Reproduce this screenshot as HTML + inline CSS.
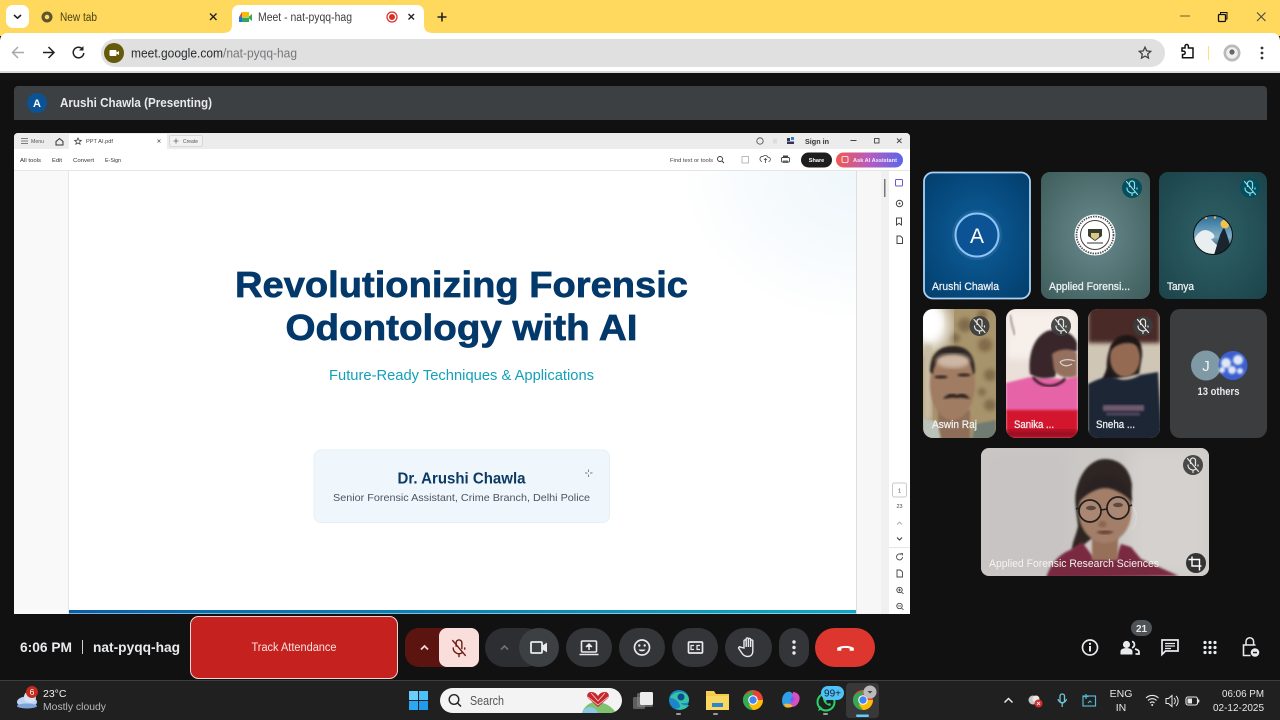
<!DOCTYPE html>
<html><head><meta charset="utf-8"><title>Meet - nat-pyqq-hag</title>
<style>
html,body{margin:0;padding:0;background:#111;width:1280px;height:720px;overflow:hidden}
svg{display:block;position:absolute;left:0;top:0;filter:blur(.3px)}
text{font-family:"Liberation Sans",sans-serif}
.m{stroke:#eef2f4;stroke-width:.28px}
</style></head><body>
<svg width="1280" height="720" viewBox="0 0 1280 720" xmlns="http://www.w3.org/2000/svg">
<defs>
<filter id="b1"><feGaussianBlur stdDeviation="1"/></filter>
<filter id="b2"><feGaussianBlur stdDeviation="2"/></filter>
<filter id="b4"><feGaussianBlur stdDeviation="4"/></filter>
<filter id="b8"><feGaussianBlur stdDeviation="8"/></filter>
<radialGradient id="g1" cx=".5" cy=".5" r=".65"><stop offset="0" stop-color="#0e5f9c"/><stop offset="1" stop-color="#03406f"/></radialGradient>
<radialGradient id="g2" cx=".5" cy=".5" r=".65"><stop offset="0" stop-color="#698a8e"/><stop offset="1" stop-color="#41605f"/></radialGradient>
<radialGradient id="g3" cx=".5" cy=".5" r=".65"><stop offset="0" stop-color="#2f6268"/><stop offset="1" stop-color="#1d454c"/></radialGradient>
<radialGradient id="corner" cx="1" cy="0" r="1"><stop offset="0" stop-color="#eff7fb"/><stop offset=".6" stop-color="#f7fbfd"/><stop offset="1" stop-color="#ffffff"/></radialGradient>
<linearGradient id="ai" x1="0" x2="1"><stop offset="0" stop-color="#f0594f"/><stop offset=".5" stop-color="#b65cc0"/><stop offset="1" stop-color="#5a67e8"/></linearGradient>
<linearGradient id="bar" x1="0" x2="1"><stop offset="0" stop-color="#0a5fa8"/><stop offset="1" stop-color="#12a7c4"/></linearGradient>
<linearGradient id="wave" x1="0" x2="0" y1="0" y2="1"><stop offset="0" stop-color="#2a6a95"/><stop offset=".55" stop-color="#7fb0c8"/><stop offset="1" stop-color="#10202c"/></linearGradient>
<linearGradient id="fold" x1="0" x2="0" y1="0" y2="1"><stop offset="0" stop-color="#f7d154"/><stop offset="1" stop-color="#e9b32e"/></linearGradient>
<clipPath id="c4"><rect x="923" y="309" width="73" height="129" rx="10"/></clipPath>
<clipPath id="c5"><rect x="1006" y="309" width="72" height="129" rx="10"/></clipPath>
<clipPath id="c6"><rect x="1088" y="309" width="72" height="129" rx="10"/></clipPath>
<clipPath id="c8"><rect x="981" y="448" width="228" height="128" rx="8"/></clipPath>
<clipPath id="tanya"><circle cx="1213" cy="235" r="19.500"/></clipPath>
<clipPath id="pill"><rect x="440" y="688" width="182" height="25" rx="12.500"/></clipPath>
<g id="mute" fill="none" stroke-linecap="round" stroke-width="1.200">
<path d="M-2.500-1.500v-3a2.500 2.500 0 0 1 5 0v5"/><path d="M-5 0a5 5 0 0 0 8 4M5 0v1M0 5v2.500M-5.500-6.500L5.500 6.500"/>
</g>
</defs>

<!-- page -->
<rect width="1280" height="720" fill="#111112"/>

<!-- browser chrome -->
<rect width="1280" height="36" fill="#ffd95e"/>
<rect x="6" y="5" width="23" height="23" rx="7" fill="#fff"/>
<path d="M14 15l3.500 3.200L21 15" fill="none" stroke="#222" stroke-width="1.600"/>
<circle cx="47" cy="17" r="5.500" fill="#5f5430"/><circle cx="47" cy="17" r="2.300" fill="#ffd95e"/>
<text x="60" y="21" font-size="11.500" fill="#4b4215" textLength="37" lengthAdjust="spacingAndGlyphs">New tab</text>
<path d="M210 13.500l6.500 6.500M216.500 13.500l-6.500 6.500" stroke="#222" stroke-width="1.400"/>
<path d="M222 33c7 0 10-2 10-9v-12c0-4 3-7 7-7h178c4 0 7 3 7 7v12c0 7 3 9 10 9z" fill="#fff"/>
<!-- meet logo -->
<rect x="242" y="12" width="7" height="5" fill="#fbbc04"/>
<path d="M242 12v5h-3z" fill="#ea4335"/>
<rect x="239" y="17" width="3" height="5" fill="#1a73e8"/><rect x="242" y="17.500" width="7" height="4.500" fill="#34a853"/>
<path d="M249 16.500l3-2.500v7l-3-2.500z" fill="#34a853"/>
<text x="258" y="21" font-size="11.500" fill="#3c4043" textLength="94" lengthAdjust="spacingAndGlyphs">Meet - nat-pyqq-hag</text>
<circle cx="392" cy="17" r="5" fill="none" stroke="#d93025" stroke-width="1.200"/><circle cx="392" cy="17" r="3" fill="#d93025"/>
<path d="M408.500 14l5.500 5.500M414 14l-5.500 5.500" stroke="#222" stroke-width="1.400"/>
<path d="M442 12.500v9M437.500 17h9" stroke="#222" stroke-width="1.600"/>
<!-- caption -->
<path d="M1180 16h10" stroke="#6b5c22" stroke-width="1"/>
<rect x="1218.500" y="14.500" width="7" height="7" rx="1" fill="none" stroke="#111" stroke-width="1.300"/><path d="M1220.500 14v-1.500h6.500v6.500h-1.500" fill="none" stroke="#111" stroke-width="1"/>
<path d="M1257 12.500l8.500 8.500M1265.500 12.500l-8.500 8.500" stroke="#444" stroke-width="1"/>

<!-- toolbar -->
<path d="M0 71V41c0-5 3-8 8-8h1264c5 0 8 3 8 8v30z" fill="#fff"/>
<rect x="0" y="71" width="1280" height="2" fill="#d9d9d9"/>
<path d="M24 52.500H13M18 47l-5.500 5.500L18 58" fill="none" stroke="#a8a8a8" stroke-width="1.500"/>
<path d="M43 52.500h11M48.500 47l5.500 5.500L48.500 58" fill="none" stroke="#222" stroke-width="1.500"/>
<path d="M82.500 49a5.300 5.300 0 1 0 1.300 4" fill="none" stroke="#222" stroke-width="1.500"/><path d="M83.500 46v4.500H79z" fill="#222"/>
<rect x="101" y="39" width="1064" height="28" rx="14" fill="#e0e0e0"/>
<circle cx="114" cy="53" r="10" fill="#655a0a"/>
<rect x="109.500" y="50" width="7" height="6" rx="1" fill="#fff"/><path d="M116.500 52.500l2.500-1.500v4l-2.500-1.500z" fill="#fff"/>
<text x="131" y="57.500" font-size="12.500" fill="#2a2d30" textLength="92" lengthAdjust="spacingAndGlyphs">meet.google.com</text>
<text x="223" y="57.500" font-size="12.500" fill="#75787b" textLength="74" lengthAdjust="spacingAndGlyphs">/nat-pyqq-hag</text>
<path d="M1145 47.200l1.700 3.700 4 .5-3 2.700.8 4-3.500-2-3.500 2 .8-4-3-2.700 4-.5z" fill="none" stroke="#444" stroke-width="1.300"/>
<path d="M1182 48h3v-1.800a1.700 1.700 0 0 1 3.400 0V48h4.600v9.800h-10.500V54.500h1a1.700 1.700 0 0 0 0-3.400h-1.500z" fill="none" stroke="#111" stroke-width="1.500"/>
<rect x="1208" y="46" width="1" height="14" fill="#ffe07a"/>
<circle cx="1232" cy="53" r="8.500" fill="#b9b9b9"/><circle cx="1232" cy="53" r="5.800" fill="#efefef"/><circle cx="1232" cy="52" r="2.600" fill="#666"/>
<circle cx="1262" cy="48" r="1.400" fill="#333"/><circle cx="1262" cy="53" r="1.400" fill="#333"/><circle cx="1262" cy="58" r="1.400" fill="#333"/>

<!-- presenter bar -->
<path d="M14 120V90a4 4 0 0 1 4-4h1245a4 4 0 0 1 4 4v30z" fill="#3c4043"/>
<circle cx="37" cy="103" r="10" fill="#0b5394"/>
<text x="37" y="107" font-size="11" font-weight="bold" fill="#fff" text-anchor="middle">A</text>
<text x="60" y="107" font-size="12.500" font-weight="bold" fill="#e8eaed" textLength="152" lengthAdjust="spacingAndGlyphs">Arushi Chawla (Presenting)</text>

<!-- PDF window -->
<path d="M14 614V137a4 4 0 0 1 4-4h888a4 4 0 0 1 4 4v473a4 4 0 0 1-4 4z" fill="#fff"/>
<path d="M14 149V137a4 4 0 0 1 4-4h888a4 4 0 0 1 4 4v12z" fill="#ececec"/>
<rect x="69" y="134" width="98" height="16" fill="#fff"/>
<path d="M21 138.500h7M21 141h7M21 143.500h7" stroke="#555" stroke-width=".8"/>
<text x="31" y="143" font-size="5.500" fill="#555" textLength="13" lengthAdjust="spacingAndGlyphs">Menu</text>
<path d="M56 141.500l3.500-3 3.500 3v3.500h-7z" fill="none" stroke="#333" stroke-width="1"/>
<path d="M78 138l1 2.200 2.300.2-1.700 1.500.5 2.300-2.100-1.200-2.100 1.200.5-2.300-1.700-1.500 2.300-.2z" fill="none" stroke="#444" stroke-width=".8"/>
<text x="86" y="143" font-size="5.500" fill="#444" textLength="27" lengthAdjust="spacingAndGlyphs">PPT AI.pdf</text>
<path d="M157.500 139.500l3 3M160.500 139.500l-3 3" stroke="#666" stroke-width=".8"/>
<rect x="169.500" y="135.500" width="33" height="11" rx="2" fill="#f1f1f1" stroke="#cfcfcf" stroke-width=".8"/>
<path d="M176 138.500v5M173.500 141h5" stroke="#666" stroke-width=".8"/>
<text x="183" y="143" font-size="5.500" fill="#555" textLength="15" lengthAdjust="spacingAndGlyphs">Create</text>
<circle cx="760" cy="141" r="3.200" fill="none" stroke="#444" stroke-width=".8"/>
<path d="M773 143.500v-3a2 2 0 0 1 4 0v3z" fill="#ddd"/>
<rect x="787" y="138" width="3" height="3" fill="#335"/><rect x="791" y="137" width="3" height="3" fill="#2b7de0"/><rect x="787" y="141.500" width="7" height="2.500" fill="#335"/>
<text x="805" y="144" font-size="7.500" font-weight="bold" fill="#333" textLength="24" lengthAdjust="spacingAndGlyphs">Sign in</text>
<path d="M850.500 140.500h6" stroke="#444" stroke-width="1"/>
<rect x="874.500" y="138.500" width="4.500" height="4.500" fill="none" stroke="#444" stroke-width=".9"/>
<path d="M897 138.500l4.500 4.500M901.500 138.500l-4.500 4.500" stroke="#444" stroke-width=".9"/>

<text x="20" y="162" font-size="5.700" fill="#333" textLength="21" lengthAdjust="spacingAndGlyphs">All tools</text>
<text x="52" y="162" font-size="5.700" fill="#333" textLength="10" lengthAdjust="spacingAndGlyphs">Edit</text>
<text x="73" y="162" font-size="5.700" fill="#333" textLength="21" lengthAdjust="spacingAndGlyphs">Convert</text>
<text x="105" y="162" font-size="5.700" fill="#333" textLength="16" lengthAdjust="spacingAndGlyphs">E-Sign</text>
<text x="670" y="162" font-size="5.700" fill="#444" textLength="43" lengthAdjust="spacingAndGlyphs">Find text or tools</text>
<circle cx="720" cy="159" r="2.500" fill="none" stroke="#333" stroke-width=".9"/><path d="M722 161l2 2" stroke="#333" stroke-width=".9"/>
<rect x="742" y="156.500" width="6.500" height="6.500" fill="none" stroke="#aaa" stroke-width=".8"/>
<path d="M762 161.500a2.500 2.500 0 0 1 1-5 3 3 0 0 1 5 .8 2 2 0 0 1 .5 4.200M765.500 163v-4M764 160l1.500-1.500L767 160" fill="none" stroke="#444" stroke-width=".8"/>
<rect x="781.500" y="157.500" width="8" height="4.500" rx="1" fill="none" stroke="#444" stroke-width=".9"/><rect x="783" y="155.500" width="5" height="2" fill="#444"/><rect x="783" y="160.500" width="5" height="2.500" fill="#666"/>
<rect x="801" y="152.500" width="31" height="15" rx="7.500" fill="#1d1d1d"/>
<text x="816.500" y="162" font-size="5.600" font-weight="bold" fill="#fff" text-anchor="middle">Share</text>
<rect x="836" y="152.500" width="67" height="15" rx="7.500" fill="url(#ai)"/>
<rect x="842" y="156.500" width="6" height="6" rx="1" fill="none" stroke="#fff" stroke-width=".8"/>
<text x="853" y="162" font-size="5.300" font-weight="bold" fill="#f5eaff" textLength="44" lengthAdjust="spacingAndGlyphs">Ask AI Assistant</text>
<rect x="14" y="170" width="896" height="1" fill="#e6e6e6"/>

<!-- pdf body -->
<rect x="14" y="171" width="54" height="443" fill="#f9f9f9"/>
<rect x="68" y="171" width="1" height="443" fill="#e6e6e6"/>
<rect x="69" y="171" width="787" height="439" fill="#fff"/>
<rect x="680" y="171" width="176" height="150" fill="url(#corner)"/>
<rect x="856" y="171" width="1" height="443" fill="#dedede"/>
<rect x="857" y="171" width="24" height="443" fill="#f7f7f7"/>
<rect x="881" y="171" width="8" height="443" fill="#f0f0f0"/>
<rect x="889" y="171" width="21" height="443" fill="#fff"/>
<rect x="884" y="179" width="1.500" height="18" fill="#777"/>
<rect x="69" y="610" width="787" height="3.500" fill="url(#bar)"/>

<text x="461.500" y="297" font-size="36" font-weight="bold" fill="#03386a" stroke="#03386a" stroke-width=".7" text-anchor="middle" textLength="453" lengthAdjust="spacingAndGlyphs">Revolutionizing Forensic</text>
<text x="461.500" y="340" font-size="36" font-weight="bold" fill="#03386a" stroke="#03386a" stroke-width=".7" text-anchor="middle" textLength="352" lengthAdjust="spacingAndGlyphs">Odontology with AI</text>
<text x="461.500" y="380" font-size="14.500" fill="#13a0b8" text-anchor="middle" textLength="265" lengthAdjust="spacingAndGlyphs">Future-Ready Techniques &amp; Applications</text>
<rect x="314" y="450" width="295.500" height="72.500" rx="7" fill="#f0f7fc" stroke="#e5eff6" stroke-width="1"/>
<text x="461.500" y="483.500" font-size="15.500" font-weight="bold" fill="#0d3a63" text-anchor="middle" textLength="128" lengthAdjust="spacingAndGlyphs">Dr. Arushi Chawla</text>
<text x="461.500" y="501" font-size="10.500" fill="#4a5560" text-anchor="middle" textLength="257" lengthAdjust="spacingAndGlyphs">Senior Forensic Assistant, Crime Branch, Delhi Police</text>
<path d="M588.500 469.500v2.500M588.500 474.500v2.500M585 473h2.500M590 473h2.500" stroke="#555" stroke-width=".7"/>

<!-- pdf right rail -->
<rect x="895.500" y="179.500" width="7" height="6.500" rx="1" fill="none" stroke="#6a58c8" stroke-width="1"/>
<circle cx="899.500" cy="203.500" r="3.200" fill="none" stroke="#444" stroke-width="1"/><circle cx="899.500" cy="203.500" r="1" fill="#444"/>
<path d="M896.500 218h5v7l-2.500-1.800-2.500 1.800z" fill="none" stroke="#444" stroke-width="1"/>
<path d="M897 236h3.500l2 2v5.500h-5.500z" fill="none" stroke="#444" stroke-width="1"/>
<rect x="892.500" y="483" width="14" height="14" rx="2" fill="#fff" stroke="#c9c9c9"/>
<text x="899.500" y="492.500" font-size="5.500" fill="#444" text-anchor="middle">1</text>
<text x="899.500" y="508" font-size="5.500" fill="#444" text-anchor="middle">23</text>
<path d="M897 524.500l2.500-2.500 2.500 2.500" fill="none" stroke="#aaa" stroke-width=".9"/>
<path d="M897 537.500l2.500 2.500 2.500-2.500" fill="none" stroke="#333" stroke-width="1"/>
<rect x="889" y="547" width="21" height="1" fill="#e6e6e6"/>
<path d="M902.500 557a3 3 0 1 1-1-2.300" fill="none" stroke="#444" stroke-width=".9"/><path d="M900.500 553.500h2v2" fill="none" stroke="#444" stroke-width=".8"/>
<path d="M897 570h3.500l2 2v5h-5.500z" fill="none" stroke="#444" stroke-width=".9"/>
<circle cx="899.500" cy="590" r="2.700" fill="none" stroke="#444" stroke-width=".9"/><path d="M901.500 592l2 2M898 590h3M899.500 588.500v3" stroke="#444" stroke-width=".8"/>
<circle cx="899.500" cy="606" r="2.700" fill="none" stroke="#444" stroke-width=".9"/><path d="M901.500 608l2 2M898 606h3" stroke="#444" stroke-width=".8"/>

<!-- tile 1 -->
<rect x="924" y="172.500" width="106" height="126" rx="9" fill="url(#g1)" stroke="#a9d2f6" stroke-width="1.800"/>
<circle cx="977" cy="235" r="25" fill="#2a6a9e" opacity=".6"/>
<circle cx="977" cy="235" r="21.500" fill="#0b5394" stroke="#8cc4f5" stroke-width="2"/>
<text x="977" y="243" font-size="21" fill="#fff" text-anchor="middle">A</text>
<text class="m" x="932" y="290" font-size="11" fill="#eef2f4" textLength="67" lengthAdjust="spacingAndGlyphs">Arushi Chawla</text>
<!-- tile 2 -->
<rect x="1041" y="172" width="109" height="127" rx="9" fill="url(#g2)"/>
<circle cx="1132" cy="188" r="10" fill="#044f5e"/>
<use href="#mute" x="1132" y="188" stroke="#8fdde8"/>
<circle cx="1095" cy="235" r="20.500" fill="#fff"/>
<circle cx="1095" cy="235" r="18.500" fill="none" stroke="#555" stroke-width="1.800" stroke-dasharray="1.500 1"/>
<circle cx="1095" cy="235" r="14.500" fill="#fff" stroke="#444" stroke-width="1"/>
<path d="M1088 229h14v7l-7 5-7-5z" fill="#3a3f30"/><path d="M1091 233h8v4l-4 3-4-3z" fill="#d8c985"/>
<path d="M1087 243h16" stroke="#777" stroke-width="1.500"/>
<text class="m" x="1049" y="290" font-size="11" fill="#eef2f4" textLength="81" lengthAdjust="spacingAndGlyphs">Applied Forensi...</text>
<!-- tile 3 -->
<rect x="1159" y="172" width="108" height="127" rx="9" fill="url(#g3)"/>
<circle cx="1250" cy="188" r="10" fill="#044f5e"/>
<use href="#mute" x="1250" y="188" stroke="#8fdde8"/>
<g clip-path="url(#tanya)">
<rect x="1193" y="215" width="40" height="40" fill="url(#wave)"/>
<path d="M1193 242c5-12 12-14 18-10 5 3 4 7 0 7 4 5 8 8 22 16h-40z" fill="#e9eef0"/>
<path d="M1214 255l6-20 4-8 3 8 6 20z" fill="#1a2530"/>
<circle cx="1225" cy="224" r="4.500" fill="#f0c34e"/>
<circle cx="1206" cy="218" r="1.200" fill="#f0c34e"/><circle cx="1215" cy="217.500" r="1.200" fill="#f0c34e"/>
</g>
<circle cx="1213" cy="235" r="19.500" fill="none" stroke="#111" stroke-width="1"/>
<text class="m" x="1167" y="290" font-size="11" fill="#eef2f4" textLength="27" lengthAdjust="spacingAndGlyphs">Tanya</text>

<!-- Aswin -->
<g clip-path="url(#c4)">
<rect x="923" y="309" width="73" height="129" fill="#a8946c"/>
<g filter="url(#b2)" fill="#6f5c3c" opacity=".7">
<circle cx="965" cy="325" r="7"/><circle cx="985" cy="345" r="7"/><circle cx="955" cy="338" r="5"/><circle cx="990" cy="375" r="6"/><circle cx="982" cy="315" r="5"/><circle cx="990" cy="405" r="6"/><circle cx="982" cy="392" r="4"/>
</g>
<ellipse cx="930" cy="325" rx="20" ry="26" fill="#fff" filter="url(#b8)"/>
<ellipse cx="930" cy="322" rx="12" ry="16" fill="#fff" filter="url(#b4)"/>
<rect x="923" y="345" width="9" height="75" fill="#c9bda6" filter="url(#b2)"/>
<rect x="938" y="410" width="32" height="30" fill="#8e6e58" filter="url(#b1)"/>
<path d="M923 418l14 4 4 17h-18z" fill="#bcc4ba" filter="url(#b1)"/>
<path d="M975 424l21-4v19h-24z" fill="#6f7c72" filter="url(#b1)"/>
<ellipse cx="952.500" cy="384" rx="22.500" ry="36" fill="#a07b62" filter="url(#b1)"/>
<path d="M930 372c0-17 8-26 23-26s22 9 22 26l-2 3c-1-13-8-19-20-19s-19 6-20 18z" fill="#2e2622" filter="url(#b1)"/>
<ellipse cx="953" cy="361" rx="17" ry="7" fill="#cdb6a4" filter="url(#b2)"/>
<ellipse cx="941" cy="377" rx="6.500" ry="1.800" fill="#3a2c26" filter="url(#b1)"/><ellipse cx="964" cy="375" rx="6.500" ry="1.800" fill="#3a2c26" filter="url(#b1)"/>
<path d="M943 399c5-6 10-6 14-4 4-2 9-2 13 4-5-1-9-2-13-1-4-1-9 0-14 1z" fill="#2b211d" filter="url(#b1)"/>
</g>
<circle cx="979.500" cy="326" r="10" fill="#3c3c3c" opacity=".92"/>
<use href="#mute" x="979.500" y="326" stroke="#e6e6e6"/>
<text class="m" x="932" y="428" font-size="11" fill="#f1f1f1" textLength="45" lengthAdjust="spacingAndGlyphs">Aswin Raj</text>

<!-- Sanika -->
<g clip-path="url(#c5)">
<rect x="1006" y="309" width="72" height="129" fill="#eadfd9"/>
<rect x="1006" y="309" width="72" height="50" fill="#f6efea" filter="url(#b4)"/>
<path d="M1010 315l2 10 3 10" stroke="#8a7e78" stroke-width="1.500" fill="none" filter="url(#b1)"/>
<path d="M1006 383l24-6 35 2 13-3v36h-72z" fill="#e764a8" filter="url(#b1)"/>
<rect x="1006" y="410" width="72" height="28" fill="#d3132e" filter="url(#b1)"/>
<rect x="1006" y="430" width="72" height="8" fill="#9b0c20" filter="url(#b2)"/>
<path d="M1030 374c-2-16 2-36 17-43 14-4 27 2 30 12v8c-9 2-18 10-22 26-8 2-18 2-25-3z" fill="#38282c" filter="url(#b1)"/>
<path d="M1052 354c8-6 20-6 25-1v23c-8 3-18 2-23-6z" fill="#96705e" filter="url(#b1)"/>
<path d="M1060 362c4-3 10-3 15-1M1060 362c2 4 7 5 12 2" stroke="#d7d1d1" stroke-width="1.200" fill="none"/>
<path d="M1033 377c5 8 16 11 25 7 4-2 6-3 7-6" stroke="#1b1618" stroke-width="2.200" fill="none" filter="url(#b1)"/>
</g>
<circle cx="1061" cy="326" r="10" fill="#3c3c3c" opacity=".92"/>
<use href="#mute" x="1061" y="326" stroke="#e6e6e6"/>
<text class="m" x="1014" y="428" font-size="11" fill="#f1f1f1" textLength="40" lengthAdjust="spacingAndGlyphs">Sanika ...</text>

<!-- Sneha -->
<g clip-path="url(#c6)">
<rect x="1088" y="309" width="72" height="129" fill="#cfc6b6"/>
<rect x="1088" y="305" width="72" height="38" fill="#4a2c25" filter="url(#b2)"/>
<path d="M1108 380c-3-14-2-38 14-44 13-3 21 6 20 20l-3 18z" fill="#221a1c" filter="url(#b1)"/>
<ellipse cx="1125" cy="358" rx="15" ry="19" fill="#956a52" filter="url(#b1)"/>
<path d="M1110 350c2-9 9-14 16-14 8 0 13 5 15 11-8-6-21-6-31 3z" fill="#1f1719" filter="url(#b1)"/>
<path d="M1108 368c-4 6-5 10-7 15l12 2z" fill="#1a1415" filter="url(#b1)"/>
<path d="M1088 384c8-4 18-9 28-6 6 3 16 2 24-3l18-3 4 68h-74z" fill="#1e2535" filter="url(#b1)"/>
<rect x="1103" y="405" width="41" height="6" fill="#8e6a80" opacity=".75" filter="url(#b1)"/>
<rect x="1106" y="412" width="34" height="4" fill="#5a4b66" opacity=".75" filter="url(#b1)"/>
</g>
<circle cx="1143" cy="326" r="10" fill="#3c3c3c" opacity=".92"/>
<use href="#mute" x="1143" y="326" stroke="#e6e6e6"/>
<text class="m" x="1096" y="428" font-size="11" fill="#f1f1f1" textLength="39" lengthAdjust="spacingAndGlyphs">Sneha ...</text>

<!-- others -->
<rect x="1170" y="309" width="97" height="129" rx="10" fill="#3c3d3f"/>
<circle cx="1206" cy="365.500" r="15" fill="#7f9aa4"/>
<text x="1206" y="371" font-size="15" fill="#f2f5f6" text-anchor="middle">J</text>
<circle cx="1233" cy="365.500" r="14.500" fill="#3c5fd0"/>
<g filter="url(#b1)" fill="#dfe8f5"><circle cx="1226" cy="363" r="5"/><circle cx="1238" cy="360" r="5"/><circle cx="1232" cy="370" r="4"/><circle cx="1222" cy="370" r="3"/><circle cx="1240" cy="371" r="3"/></g>
<text x="1218.500" y="395" font-size="11" font-weight="bold" fill="#e8eaed" text-anchor="middle" textLength="42" lengthAdjust="spacingAndGlyphs">13 others</text>

<!-- big video -->
<g clip-path="url(#c8)">
<rect x="981" y="448" width="228" height="128" fill="#cbc8c6"/>
<rect x="1130" y="448" width="79" height="128" fill="#d4d1cf" filter="url(#b8)"/>
<rect x="981" y="448" width="90" height="128" fill="#c7c4c3" filter="url(#b8)"/>
<path d="M1072 550c0-8 4-14 6-24-2-20-5-28 0-42 5-16 16-25 27-25 15 0 25 10 27 26l-1 22-50 40z" fill="#2e2624" filter="url(#b1)"/>
<path d="M1046 578c4-12 10-22 24-28l12-8 12 16h22l5-14 10 3 10 12 38 17z" fill="#7a2c40" filter="url(#b1)"/>
<rect x="1092" y="536" width="26" height="24" fill="#97705a" filter="url(#b1)"/>
<ellipse cx="1105" cy="511" rx="26.500" ry="32" fill="#a37f69" filter="url(#b1)"/>
<path d="M1078 502c2-17 13-26 27-26 14 0 25 9 27 25-9-7-18-13-27-13-9 0-18 6-27 14z" fill="#2c2422" filter="url(#b1)"/>
<circle cx="1090" cy="511" r="11" fill="#b99b87" fill-opacity=".3" stroke="#241e1c" stroke-width="1.700"/>
<circle cx="1118" cy="508" r="11" fill="#b99b87" fill-opacity=".3" stroke="#241e1c" stroke-width="1.700"/>
<path d="M1101 510l6-1M1079 508l-3 1M1129 506l3-1" stroke="#241e1c" stroke-width="1.500"/>
<ellipse cx="1091" cy="508" rx="5" ry="2.200" fill="#5a4a42"/><ellipse cx="1118" cy="505" rx="5" ry="2.200" fill="#5a4a42"/>
<path d="M1100 521l-2 5c3 2 6 2 9 0l-2-5" fill="#8d6650" filter="url(#b1)"/>
<path d="M1096 532c6-2 13-2 18 0-5 3-13 3-18 0z" fill="#6a3f36" filter="url(#b1)"/>
<path d="M1133 507c4 5 5 16-1 22" stroke="#dbd6d4" stroke-width="1.500" fill="none"/>
</g>
<circle cx="1193" cy="465" r="10" fill="#3c3c3c" opacity=".92"/>
<use href="#mute" x="1193" y="465" stroke="#e6e6e6"/>
<text x="989" y="567" font-size="11" fill="#f4f4f4" textLength="170" lengthAdjust="spacingAndGlyphs">Applied Forensic Research Sciences</text>
<circle cx="1196" cy="563" r="10" fill="#333"/>
<path d="M1192 556.500v9.500h9.500M1188.500 559.500h11v11" fill="none" stroke="#fff" stroke-width="1.400"/>

<!-- bottom bar -->
<text x="20" y="652" font-size="14" font-weight="bold" fill="#e8eaed" textLength="52" lengthAdjust="spacingAndGlyphs">6:06 PM</text>
<rect x="82" y="640" width="1" height="14" fill="#d0d0d0"/>
<text x="93" y="652" font-size="14" font-weight="bold" fill="#e8eaed" textLength="87" lengthAdjust="spacingAndGlyphs">nat-pyqq-hag</text>
<rect x="190.500" y="616.500" width="207" height="62" rx="8" fill="#c5221f" stroke="#f1d5d2" stroke-width="1"/>
<text x="294" y="651" font-size="11.500" fill="#fbe3e1" text-anchor="middle" textLength="85" lengthAdjust="spacingAndGlyphs">Track Attendance</text>

<rect x="405" y="628" width="60" height="39" rx="14" fill="#5c1410"/>
<rect x="439" y="628" width="40" height="39" rx="8" fill="#f9dedc"/>
<path d="M421 649.500l3.500-3.500 3.500 3.500" fill="none" stroke="#f5d5d2" stroke-width="1.800"/>
<g transform="translate(459,648) scale(1.150)"><use href="#mute" stroke="#6a1a14" stroke-width="1.800"/></g>

<rect x="485" y="628" width="60" height="39" rx="19.500" fill="#2c2e31"/>
<rect x="519" y="628" width="40" height="39" rx="19.500" fill="#3c4043"/>
<path d="M501 649.500l3.500-3.500 3.500 3.500" fill="none" stroke="#6f7276" stroke-width="1.600"/>
<rect x="531" y="642" width="11" height="11" rx="1" fill="none" stroke="#e8eaed" stroke-width="1.800"/>
<path d="M542.500 646l4-2.500v8l-4-2.500z" fill="#e8eaed" stroke="#e8eaed"/>

<rect x="566" y="628" width="46" height="39" rx="19.500" fill="#333538"/>
<rect x="581.500" y="641" width="15" height="11" rx="1" fill="none" stroke="#e8eaed" stroke-width="1.600"/>
<path d="M579.500 654.500h19" stroke="#e8eaed" stroke-width="1.600"/>
<path d="M589 650v-6M586 647l3-3 3 3" fill="#e8eaed" stroke="#e8eaed" stroke-width="1.500"/>

<rect x="619" y="628" width="46" height="39" rx="19.500" fill="#333538"/>
<circle cx="642" cy="647.500" r="7.500" fill="none" stroke="#e8eaed" stroke-width="1.700"/>
<circle cx="639.300" cy="645.500" r="1.200" fill="#e8eaed"/><circle cx="644.700" cy="645.500" r="1.200" fill="#e8eaed"/>
<path d="M638.500 649.500c1 2.500 6 2.500 7 0z" fill="#e8eaed"/>

<rect x="672" y="628" width="46" height="39" rx="19.500" fill="#333538"/>
<rect x="688.500" y="642" width="14" height="11" rx="1" fill="none" stroke="#e8eaed" stroke-width="1.700"/>
<path d="M694 645.500h-3v4h3M700 645.500h-3v4h3" fill="none" stroke="#e8eaed" stroke-width="1.200"/>

<rect x="725" y="628" width="47" height="39" rx="19.500" fill="#333538"/>
<path d="M744 648v-7a1.100 1.100 0 0 1 2.200 0v6-8a1.100 1.100 0 0 1 2.200 0v8-7.500a1.100 1.100 0 0 1 2.200 0v7.500-6a1.100 1.100 0 0 1 2.200 0v10c0 3.500-2 5.500-5 5.500-3 0-4.500-1.200-6-3.500l-3-4.500c-.7-1.200.8-2.300 1.800-1.300z" fill="none" stroke="#e8eaed" stroke-width="1.400"/>

<rect x="779" y="628" width="30" height="39" rx="15" fill="#333538"/>
<circle cx="794" cy="642" r="1.700" fill="#e8eaed"/><circle cx="794" cy="647.500" r="1.700" fill="#e8eaed"/><circle cx="794" cy="653" r="1.700" fill="#e8eaed"/>

<rect x="815" y="628" width="60" height="39" rx="19.500" fill="#dc362e"/>
<path d="M837.500 650.500v-2.500c4.500-2.500 11.500-2.500 16 0v2.500h-3.500v-2.200c-2.500-.8-6.500-.8-9 0v2.200z" fill="#fff" stroke="#fff" stroke-width=".6"/>

<circle cx="1090" cy="647.500" r="7.500" fill="none" stroke="#e8eaed" stroke-width="1.700"/>
<rect x="1089" y="646" width="2" height="5.500" fill="#e8eaed"/><rect x="1089" y="642.800" width="2" height="2" fill="#e8eaed"/>
<rect x="1131" y="620" width="21" height="16" rx="8" fill="#505356"/>
<text x="1141.500" y="632" font-size="10" font-weight="bold" fill="#e8eaed" text-anchor="middle">21</text>
<circle cx="1126.500" cy="644.500" r="3.600" fill="#e8eaed"/>
<path d="M1121 654v-2.500c0-2 3-3 5.500-3s5.500 1 5.500 3v2.500z" fill="#e8eaed" stroke="#e8eaed"/>
<path d="M1132 641.500a3.200 3.200 0 0 1 0 6.200M1135 649c2 .5 4 1.500 4 3v2h-3.500" fill="none" stroke="#e8eaed" stroke-width="1.800"/>
<path d="M1162 640h16v11h-12.500l-3.500 3.500z" fill="none" stroke="#e8eaed" stroke-width="1.700"/>
<path d="M1165 643.500h10M1165 646h10M1165 648.500h6" stroke="#e8eaed" stroke-width="1.200"/>
<g fill="#e8eaed"><circle cx="1205" cy="642.500" r="1.600"/><circle cx="1210" cy="642.500" r="1.600"/><circle cx="1215" cy="642.500" r="1.600"/><circle cx="1205" cy="647.500" r="1.600"/><circle cx="1210" cy="647.500" r="1.600"/><circle cx="1215" cy="647.500" r="1.600"/><circle cx="1205" cy="652.500" r="1.600"/><circle cx="1210" cy="652.500" r="1.600"/><circle cx="1215" cy="652.500" r="1.600"/></g>
<path d="M1246 645v-3.500a3.800 3.800 0 0 1 7.600 0v3.500" fill="none" stroke="#e8eaed" stroke-width="1.500"/>
<path d="M1255.500 645h-12v10.500h7" fill="none" stroke="#e8eaed" stroke-width="1.600"/>
<circle cx="1255" cy="652.500" r="4.300" fill="#e8eaed"/><rect x="1253" y="651.800" width="4" height="1.500" fill="#222"/>

<!-- taskbar -->
<rect x="0" y="680" width="1280" height="40" fill="#202020"/>
<rect x="0" y="680" width="1280" height="1" fill="#3e3e3e"/>
<!-- weather -->
<ellipse cx="27" cy="702" rx="10" ry="5.500" fill="#bcd3f2"/><circle cx="30" cy="697" r="6" fill="#d6e2f5"/><ellipse cx="27" cy="706" rx="10" ry="2.500" fill="#7da4db"/>
<circle cx="32" cy="692" r="6" fill="#c42b1c"/>
<text x="32" y="695" font-size="8.500" fill="#fff" text-anchor="middle">6</text>
<text x="43" y="697" font-size="10.500" fill="#f1f1f1">23°C</text>
<text x="43" y="710" font-size="10.500" fill="#b8b8b8" textLength="63" lengthAdjust="spacingAndGlyphs">Mostly cloudy</text>
<!-- start -->
<rect x="409" y="691" width="9" height="9" fill="#6ccff9"/><rect x="419" y="691" width="9" height="9" fill="#4cc1f8"/><rect x="409" y="701" width="9" height="9" fill="#2aa8f2"/><rect x="419" y="701" width="9" height="9" fill="#1f9bec"/>
<rect x="440" y="688" width="182" height="25" rx="12.500" fill="#f3f3f3"/>
<circle cx="454" cy="699.500" r="4.800" fill="none" stroke="#222" stroke-width="1.400"/><path d="M457.500 703l3.500 3.500" stroke="#222" stroke-width="1.500"/>
<text x="470" y="705" font-size="12.500" fill="#555" textLength="34" lengthAdjust="spacingAndGlyphs">Search</text>
<g clip-path="url(#pill)">
<path d="M582 713c2-7 8-11 14-11 8 0 16 4 20 11z" fill="#7fc36f"/><path d="M582 713c2-4 5-6 8-6 4 0 7 3 8 6z" fill="#8dc7ea"/>
</g>
<path d="M598 707l-10-9c-2-3 0-6 3-6 3 0 5 1 7 4 2-3 4-4 7-4 3 0 5 3 3 6z" fill="#c8262c"/>
<path d="M591 693l7 8 7-8M588 697l10 8 10-8" fill="none" stroke="#f3d8d8" stroke-width=".8"/>
<!-- task view -->
<rect x="633" y="697" width="12" height="12" rx="1.500" fill="#5e5e5e"/><rect x="637" y="693" width="16" height="14" rx="1.500" fill="#8a8a8a" opacity=".6"/><rect x="640" y="692" width="13" height="13" rx="1.500" fill="#ececec"/>
<!-- edge -->
<circle cx="679" cy="700" r="10" fill="#1b86c9"/><path d="M670 698c3-7 14-8 18-2 2 4 1 7-2 7h-5c1 2 4 3 8 2-3 5-10 6-14 3 3 1 5 0 5-2-1-5-6-8-10-8z" fill="#36c3a8"/><circle cx="681" cy="697" r="3.500" fill="#0a4f8a"/>
<rect x="676" y="713" width="5" height="2" rx="1" fill="#9a9a9a"/>
<!-- folder -->
<path d="M706 691h8l2 3h13v16h-23z" fill="url(#fold)"/><rect x="706" y="696" width="23" height="14" fill="#f8d860"/><rect x="712" y="703" width="11" height="4" fill="#2a86d0"/>
<rect x="713" y="713" width="5" height="2" rx="1" fill="#9a9a9a"/>
<!-- chrome -->
<g id="chr"><circle cx="753" cy="700" r="10" fill="#ea4335"/><path d="M753 700L744.300 705a10 10 0 0 1 0-10l8.700-5z" fill="#34a853"/><path d="M753 710a10 10 0 0 1-8.700-5L753 700l8.700 0z" fill="#34a853"/><path d="M763 700a10 10 0 0 1-10 10l-4-5 4-5z" fill="#fbbc04"/><circle cx="753" cy="700" r="4.800" fill="#fff"/><circle cx="753" cy="700" r="3.700" fill="#4285f4"/></g>
<!-- copilot -->
<path d="M787 692c3-1 5 0 6 3l2 7-5 5c-3 1-6 0-7-2-2-4-1-11 4-13z" fill="#2f9fe8"/>
<path d="M793 692c3 0 6 2 6.500 5 .5 3-1 7-4 9-2 1-4 1-5 0l1-8z" fill="#d84fc0"/>
<path d="M784 704c3-1 7 0 9 2-2 2-6 2-8 1z" fill="#f4b73a"/><path d="M792 696l3 3-3 4-2-3z" fill="#7c5cf0"/>
<!-- whatsapp -->
<circle cx="826" cy="702" r="8.500" fill="none" stroke="#25d366" stroke-width="2"/>
<path d="M818 711l2-5 3 3z" fill="#25d366"/><path d="M823 698c0 4 3 7 7 8l1-2-2-1-1 1c-1-1-2-2-2-3l1-1-1-2z" fill="#25d366"/>
<rect x="821" y="686" width="23" height="14" rx="7" fill="#4fc3f7"/>
<text x="832.500" y="696.500" font-size="10" fill="#102030" text-anchor="middle">99+</text>
<rect x="823" y="713" width="5" height="2" rx="1" fill="#9a9a9a"/>
<!-- chrome active -->
<rect x="846" y="683" width="33" height="35" rx="4" fill="#383838"/>
<use href="#chr" x="110"/>
<circle cx="870" cy="692" r="6.500" fill="#bbb"/><path d="M867.500 691l2.500 2.500 2.500-2.500z" fill="#444"/>
<rect x="856" y="714.500" width="13" height="2.500" rx="1.200" fill="#60cdff"/>

<!-- tray -->
<path d="M1004.500 702.500l4-4 4 4" fill="none" stroke="#e8e8e8" stroke-width="1.500"/>
<circle cx="1033" cy="700" r="4.500" fill="#c7c7c7"/><circle cx="1036" cy="699" r="3.500" fill="#e9e9e9"/>
<circle cx="1038.500" cy="703.500" r="4" fill="#d32f2f"/><path d="M1037 702l3 3M1040 702l-3 3" stroke="#fff" stroke-width=".8"/>
<rect x="1060" y="694" width="4.500" height="9" rx="2.200" fill="none" stroke="#6fc7d6" stroke-width="1.300"/>
<path d="M1058 699a4.300 4.300 0 0 0 8.500 0M1062.200 703.500v3.500" fill="none" stroke="#6fc7d6" stroke-width="1.200"/>
<rect x="1083" y="696" width="12.500" height="10" fill="none" stroke="#57b6d0" stroke-width="1.200"/>
<path d="M1086 694v5M1083.500 696.500h5" stroke="#57b6d0" stroke-width="1.200"/><path d="M1088 703l2-2 1.500 1.500" stroke="#57b6d0" fill="none"/>
<text x="1121" y="697" font-size="10.500" fill="#e8e8e8" text-anchor="middle">ENG</text>
<text x="1121" y="711" font-size="10.500" fill="#e8e8e8" text-anchor="middle">IN</text>
<path d="M1146 698a9 9 0 0 1 12.500 0M1148 700.500a6 6 0 0 1 8.500 0M1150 703a3 3 0 0 1 4.500 0" fill="none" stroke="#e8e8e8" stroke-width="1.100"/>
<circle cx="1152.200" cy="705" r="1" fill="#e8e8e8"/>
<path d="M1166 698.500h2.500l3.500-3v11l-3.500-3H1166z" fill="none" stroke="#e8e8e8" stroke-width="1"/>
<path d="M1174 698a4 4 0 0 1 0 6M1176 696a7 7 0 0 1 0 10" fill="none" stroke="#e8e8e8" stroke-width="1"/>
<rect x="1186" y="697" width="11.500" height="8" rx="2" fill="none" stroke="#e8e8e8" stroke-width="1.100"/>
<rect x="1187.500" y="698.500" width="4.500" height="5" fill="#e8e8e8"/><rect x="1198" y="699.500" width="1.300" height="3" fill="#e8e8e8"/>
<text x="1264" y="697" font-size="10.500" fill="#e8e8e8" text-anchor="end" textLength="42" lengthAdjust="spacingAndGlyphs">06:06 PM</text>
<text x="1264" y="711" font-size="10.500" fill="#e8e8e8" text-anchor="end" textLength="51" lengthAdjust="spacingAndGlyphs">02-12-2025</text>
</svg>
</body></html>
